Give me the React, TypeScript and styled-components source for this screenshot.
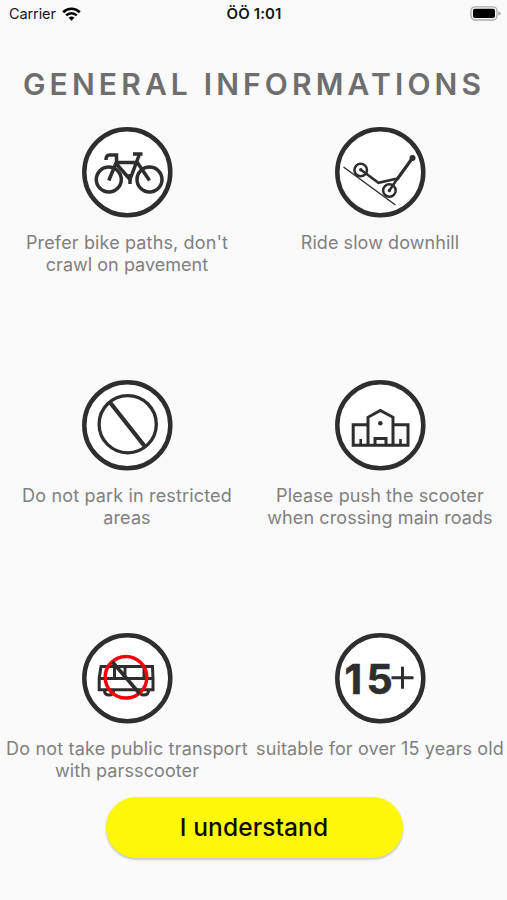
import React from "react";
import styled, { createGlobalStyle } from "styled-components";

const INK = "#2e2e2e";

const GlobalStyle = createGlobalStyle`
  body {
    margin: 0;
    background: #fafafa;
    font-family: Inter, "Liberation Sans", sans-serif;
  }
`;

const Screen = styled.main`
  width: 507px;
  height: 900px;
  overflow: hidden;
  display: flex;
  flex-direction: column;
  background: #fafafa;
`;

const StatusBar = styled.header`
  height: 27px;
  flex: none;
  display: grid;
  grid-template-columns: 1fr auto 1fr;
  align-items: center;
  padding: 0 6px 0 9px;
  box-sizing: border-box;
  color: #161616;
`;

const Carrier = styled.div`
  display: flex;
  align-items: center;
  gap: 6px;
  font-size: 14.5px;
  letter-spacing: -0.1px;
`;

const Clock = styled.time`
  font-size: 15px;
  font-weight: 600;
  letter-spacing: 0.1px;
  margin-right: 2px;
`;

const Battery = styled.svg`
  justify-self: end;
`;

const Title = styled.h1`
  margin: 38px 0 0;
  height: 38px;
  line-height: 38px;
  padding-left: 23px;
  white-space: nowrap;
  font-size: 30px;
  font-weight: 600;
  letter-spacing: 4.15px;
  color: #6e6e6e;
`;

const Rules = styled.section`
  display: grid;
  grid-template-columns: 254px 252px;
  grid-auto-rows: 253px;
  margin-top: 19px;
  height: 675px;
  flex: none;
`;

const Rule = styled.article`
  display: flex;
  flex-direction: column;
  align-items: center;
`;

const Badge = styled.svg`
  display: block;
  width: 100px;
  height: 100px;
  fill: none;
  stroke: ${INK};
`;

const Caption = styled.p`
  margin: 10px 0 0;
  display: flex;
  flex-direction: column;
  align-items: center;
  color: #808080;
`;

const Line = styled.span<{ $track: number }>`
  font-size: 18px;
  line-height: 22px;
  white-space: nowrap;
  letter-spacing: ${(p) => p.$track}px;
`;

const Confirm = styled.button`
  align-self: center;
  flex: none;
  width: 297px;
  height: 61px;
  margin: 0 0 0 1px;
  padding: 0;
  border: 0;
  border-radius: 31px;
  background: #fff70a;
  color: #0c0c00;
  font: 500 24.5px/61px Inter, "Liberation Sans", sans-serif;
  letter-spacing: 0.1px;
  box-shadow: 0 2px 2px rgba(0, 0, 0, 0.14), 0 1px 3px rgba(0, 0, 0, 0.1);
`;

const Ring = () => <circle cx="50.3" cy="50.3" r="43" fill="#fff" strokeWidth="4.5" />;

const BikeIcon = () => (
  <Badge viewBox="0 0 100 100">
    <Ring />
    <g strokeWidth="3.5">
      <circle cx="31.8" cy="57.5" r="12.5" />
      <circle cx="72.5" cy="57.5" r="12.5" />
      <path d="M31.8 58.5 39.5 40V33H32.5q-3.5 0-3.5 5" />
      <path d="M39 40.5H60.5M39.5 42 53 57.5 62 33.5M56 32h9.5M60 40 72.5 58.5" />
      <path d="M53 52v10" />
    </g>
  </Badge>
);

const ScooterIcon = () => (
  <Badge viewBox="0 0 100 100">
    <Ring />
    <path d="M13.5 45 65.5 83" strokeWidth="1.5" />
    <g strokeWidth="2.5">
      <circle cx="30.7" cy="48" r="6.3" />
      <circle cx="59.4" cy="68.5" r="6.3" />
      <path d="M30.5 47.5 48.5 60.8 67.5 56.5M59.4 68.5 67.5 56.5 82 36.5" />
    </g>
    <path d="M67 57.5 82.5 36" strokeWidth="3" />
    <circle cx="82.5" cy="36" r="3" fill={INK} stroke="none" />
    <circle cx="59.4" cy="68.5" r="1.7" fill={INK} stroke="none" />
    <circle cx="30.7" cy="47.8" r="1.7" fill={INK} stroke="none" />
  </Badge>
);

const NoParkingIcon = () => (
  <Badge viewBox="0 0 100 100">
    <Ring />
    <circle cx="50.7" cy="49.2" r="28.6" strokeWidth="3.3" />
    <path d="M33.5 28 67.5 71" strokeWidth="4.2" />
  </Badge>
);

const BuildingIcon = () => (
  <Badge viewBox="0 0 100 100">
    <Ring />
    <g strokeWidth="3">
      <path d="M38 70.2V42.3L50.3 35.5 63 42.3V70.2" />
      <path d="M38 49.8H23.2V70.2H78V49.8H63M45 70V63.5H56V70" />
      <path d="M30.7 64v6M70.5 64v6" strokeWidth="2.6" />
    </g>
    <circle cx="50.3" cy="48.2" r="2.3" fill={INK} stroke="none" />
  </Badge>
);

const NoBusIcon = () => (
  <Badge viewBox="0 0 100 100">
    <Ring />
    <g strokeWidth="3">
      <path d="M24 38.5H75.5L76 51V61.8H22.2V50Z" />
      <path d="M22.5 50.5H76M37.5 39v11M48 39v11M67 39v11" />
      <path d="M27.5 62.5q0 4.5 4.5 4.5t4.5-4.5M62.5 62.5q0 4.5 4.5 4.5t4.5-4.5" />
    </g>
    <circle cx="49" cy="49.3" r="20.8" stroke="#f3000b" strokeWidth="3.5" />
    <path d="M35.5 34 62.5 65.5" strokeWidth="3.6" />
  </Badge>
);

const AgeText = styled.text`
  font: 700 41px Inter, sans-serif;
  fill: ${INK};
  stroke: ${INK};
  stroke-width: 0.6px;
`;

const AgeIcon = () => (
  <Badge viewBox="0 0 100 100">
    <Ring />
    <AgeText x="14.5 36.5" y="66.3">15</AgeText>
    <path d="M61.5 49.8H83.5M72.5 38.8v22" strokeWidth="3" />
  </Badge>
);

type RuleData = { Icon: React.FC; lines: [string, number][] };

const rules: RuleData[] = [
  { Icon: BikeIcon, lines: [["Prefer bike paths, don't", 0.14], ["crawl on pavement", 0.03]] },
  { Icon: ScooterIcon, lines: [["Ride slow downhill", 0.07]] },
  { Icon: NoParkingIcon, lines: [["Do not park in restricted", 0.16], ["areas", 0.12]] },
  { Icon: BuildingIcon, lines: [["Please push the scooter", 0.12], ["when crossing main roads", 0.09]] },
  { Icon: NoBusIcon, lines: [["Do not take public transport", 0.18], ["with parsscooter", 0.1]] },
  { Icon: AgeIcon, lines: [["suitable for over 15 years old", 0.12]] },
];

export default function App() {
  return (
    <>
      <GlobalStyle />
      <Screen>
        <StatusBar>
          <Carrier>
            Carrier
            <svg width="19" height="14" viewBox="0 0 19 14" fill="none" stroke="#000">
              <path d="M1.2 5.2C5.8 .6 13.2 .6 17.8 5.2" strokeWidth="2.7" />
              <path d="M4.2 8.3C7.2 5.4 11.8 5.4 14.8 8.3" strokeWidth="2.5" />
              <path d="M6.6 10.8Q9.5 8.2 12.4 10.8L9.5 13.7Z" fill="#000" stroke="none" />
            </svg>
          </Carrier>
          <Clock>ÖÖ 1:01</Clock>
          <Battery width="31" height="15" viewBox="0 0 31 15">
            <rect x="1" y=".8" width="26" height="13.2" rx="4" fill="#fafafa" stroke="#a9a9a9" strokeWidth="1.3" />
            <rect x="3" y="2.8" width="22" height="9.2" rx="1.8" fill="#000" />
            <path d="M28.4 5.2q2.4 1 2.4 2.3t-2.4 2.3z" fill="#a9a9a9" />
          </Battery>
        </StatusBar>
        <Title>GENERAL INFORMATIONS</Title>
        <Rules>
          {rules.map(({ Icon, lines }) => (
            <Rule key={lines[0][0]}>
              <Icon />
              <Caption>
                {lines.map(([text, track]) => (
                  <Line key={text} $track={track}>{text}</Line>
                ))}
              </Caption>
            </Rule>
          ))}
        </Rules>
        <Confirm>I understand</Confirm>
      </Screen>
    </>
  );
}
